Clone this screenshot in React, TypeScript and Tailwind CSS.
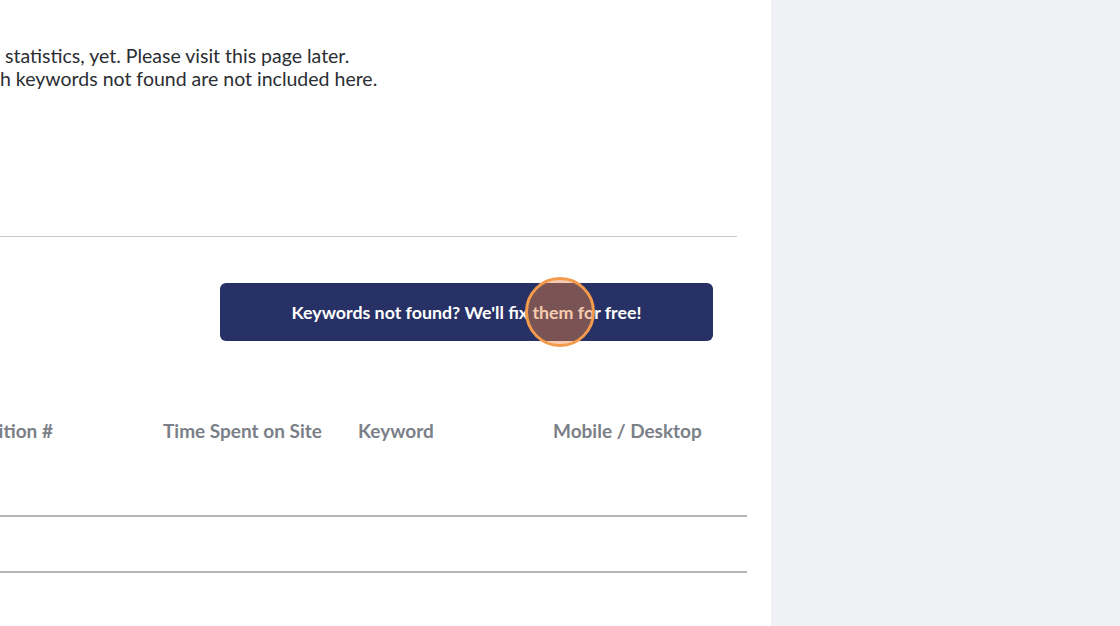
const columns = ["Position #", "Time Spent on Site", "Keyword", "Mobile / Desktop"];

export default function App() {
  return (
    <div className="flex h-[626px] w-[1120px] overflow-hidden font-['Lato',sans-serif]">
      <main className="w-[771px] shrink-0 overflow-hidden bg-white">
        <div className="pt-[44px] text-[19.5px] leading-[23px] text-[#2b2e33]">
          <p className="whitespace-nowrap">&nbsp;statistics, yet. Please visit this page later.</p>
          <p className="whitespace-nowrap">h keywords not found are not included here.</p>
        </div>

        <hr className="mt-[146px] w-[737px] border-t border-[#c6c6c6]" />

        <div className="ml-[220px] mt-[46px]">
          <button className="relative flex h-[58px] w-[493px] items-center justify-center rounded-[6px] bg-[#283166] text-[17.8px] font-bold text-white">
            Keywords not found? We'll fix them for free!
            <span className="absolute left-[305px] top-[-6px] h-[70px] w-[70px] rounded-full border-[3px] border-[#f39a4c] bg-[rgba(236,132,62,0.42)]" />
          </button>
        </div>

        <div className="-ml-[32px] mt-[76px] flex w-[780px] text-[19px] font-bold text-[#7b8088]">
          {columns.map((c) => (
            <div key={c} className="w-[195.5px] whitespace-nowrap">
              {c}
            </div>
          ))}
        </div>

        <div className="mt-[69px] h-[56px] w-[747px] border-t-2 border-[#b5b5b5]" />
        <div className="w-[747px] border-t-2 border-[#b5b5b5]" />
      </main>
      <aside className="flex-1 bg-[#f0f1f5]" />
    </div>
  );
}
